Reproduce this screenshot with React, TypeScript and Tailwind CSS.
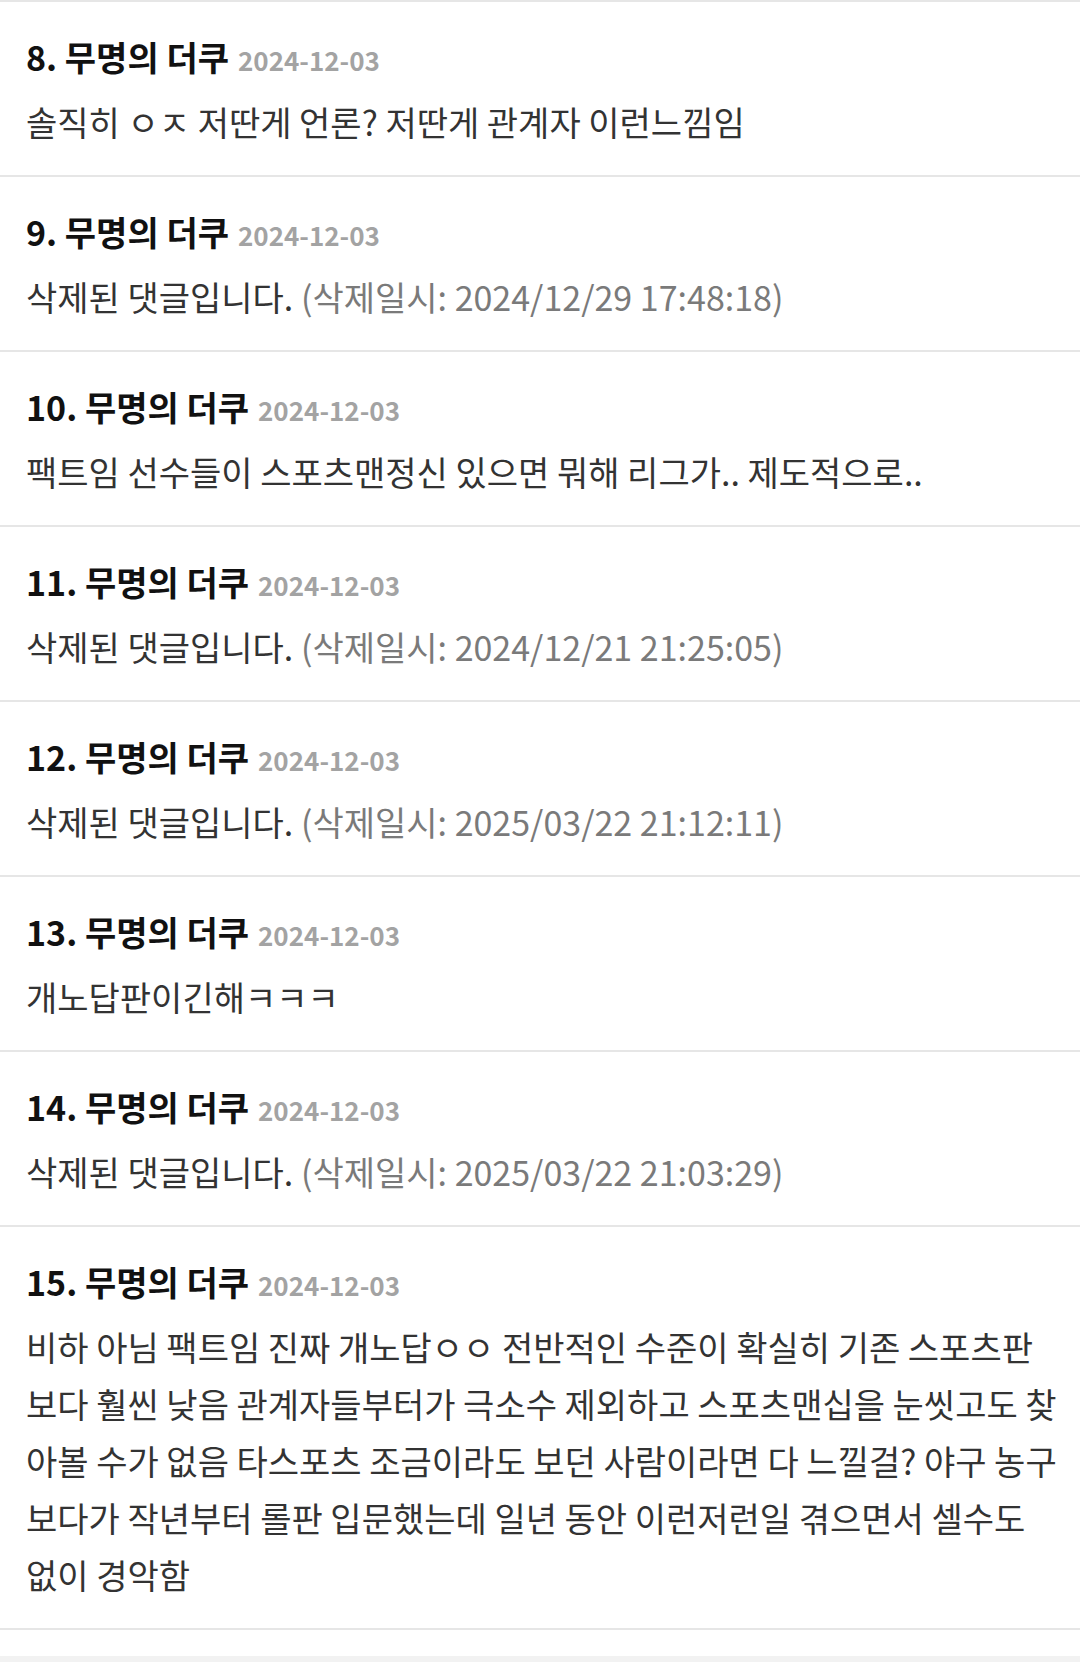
type Comment = {
  no: number
  date: string
  lines?: string[]
  deletedAt?: string
}

const comments: Comment[] = [
  { no: 8, date: '2024-12-03', lines: ['솔직히 ㅇㅈ 저딴게 언론? 저딴게 관계자 이런느낌임'] },
  { no: 9, date: '2024-12-03', deletedAt: '2024/12/29 17:48:18' },
  { no: 10, date: '2024-12-03', lines: ['팩트임 선수들이 스포츠맨정신 있으면 뭐해 리그가.. 제도적으로..'] },
  { no: 11, date: '2024-12-03', deletedAt: '2024/12/21 21:25:05' },
  { no: 12, date: '2024-12-03', deletedAt: '2025/03/22 21:12:11' },
  { no: 13, date: '2024-12-03', lines: ['개노답판이긴해ㅋㅋㅋ'] },
  { no: 14, date: '2024-12-03', deletedAt: '2025/03/22 21:03:29' },
  {
    no: 15,
    date: '2024-12-03',
    // keep the original wrap points
    lines: [
      '비하 아님 팩트임 진짜 개노답ㅇㅇ 전반적인 수준이 확실히 기존 스포츠판',
      '보다 훨씬 낮음 관계자들부터가 극소수 제외하고 스포츠맨십을 눈씻고도 찾',
      '아볼 수가 없음 타스포츠 조금이라도 보던 사람이라면 다 느낄걸? 야구 농구',
      '보다가 작년부터 롤판 입문했는데 일년 동안 이런저런일 겪으면서 셀수도',
      '없이 경악함',
    ],
  },
]

function CommentRow({ c }: { c: Comment }) {
  return (
    <li className="border-b-2 border-[#e6e6e6] pl-[26px] pr-[6px] pt-[35px] pb-[25px]">
      <div className="flex items-baseline gap-[9px] leading-[40px]">
        <span className="text-[34px] font-bold text-[#111111]">{c.no}. 무명의 더쿠</span>
        <span className="text-[26px] font-bold text-[#a3a3a3]">{c.date}</span>
      </div>
      <p className="mt-[13px] text-[34px] leading-[57px] text-[#333333]">
        {c.deletedAt ? (
          <>
            삭제된 댓글입니다. <span className="text-[#7a7a7a]">(삭제일시: {c.deletedAt})</span>
          </>
        ) : (
          c.lines?.map((line, i) => (
            <span key={i} className="block whitespace-nowrap">{line}</span>
          ))
        )}
      </p>
    </li>
  )
}

export default function App() {
  return (
    <div className="min-h-[1663px] bg-white font-['Noto_Sans_CJK_KR',sans-serif]">
      <ul className="border-t-2 border-[#e6e6e6]">
        {comments.map((c) => (
          <CommentRow key={c.no} c={c} />
        ))}
      </ul>
      <div className="h-[26px] bg-white" />
      <div className="h-[6px] bg-[#f2f2f2]" />
    </div>
  )
}
